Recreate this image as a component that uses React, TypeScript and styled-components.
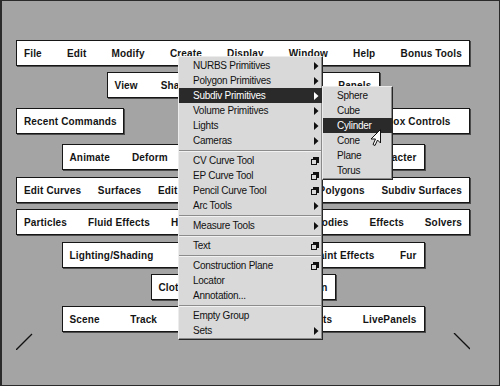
import React from "react";
import styled, { createGlobalStyle } from "styled-components";

type MenuEntry =
  | { label: string; kind?: "arrow" | "option"; active?: boolean }
  | "sep";

const createItems: MenuEntry[] = [
  { label: "NURBS Primitives", kind: "arrow" },
  { label: "Polygon Primitives", kind: "arrow" },
  { label: "Subdiv Primitives", kind: "arrow", active: true },
  { label: "Volume Primitives", kind: "arrow" },
  { label: "Lights", kind: "arrow" },
  { label: "Cameras", kind: "arrow" },
  "sep",
  { label: "CV Curve Tool", kind: "option" },
  { label: "EP Curve Tool", kind: "option" },
  { label: "Pencil Curve Tool", kind: "option" },
  { label: "Arc Tools", kind: "arrow" },
  "sep",
  { label: "Measure Tools", kind: "arrow" },
  "sep",
  { label: "Text", kind: "option" },
  "sep",
  { label: "Construction Plane", kind: "option" },
  { label: "Locator" },
  { label: "Annotation..." },
  "sep",
  { label: "Empty Group" },
  { label: "Sets", kind: "arrow" },
];

const subdivItems = ["Sphere", "Cube", "Cylinder", "Cone", "Plane", "Torus"];

const rows: { labels: string[]; width: number; mt: number }[] = [
  {
    labels: ["File", "Edit", "Modify", "Create", "Display", "Window", "Help", "Bonus Tools"],
    width: 454,
    mt: 0,
  },
  { labels: ["View", "Shading", "Lighting", "Show", "Panels"], width: 273, mt: 6 },
];

const lowerRows: { labels: string[]; width: number; mt: number }[] = [
  {
    labels: ["Animate", "Deform", "Skeleton", "Skin", "Constrain", "Character"],
    width: 363,
    mt: 10,
  },
  {
    labels: ["Edit Curves", "Surfaces", "Edit NURBS", "Polygons", "Edit Polygons", "Subdiv Surfaces"],
    width: 454,
    mt: 7,
  },
  {
    labels: ["Particles", "Fluid Effects", "Hair", "Fields", "Soft/Rigid Bodies", "Effects", "Solvers"],
    width: 454,
    mt: 6,
  },
  {
    labels: ["Lighting/Shading", "Texturing", "Render", "Paint Effects", "Fur"],
    width: 363,
    mt: 7,
  },
  { labels: ["Cloth", "Constraints", "Simulation"], width: 185, mt: 6 },
  { labels: ["Scene", "Track", "Solve Tools", "Constraints", "LivePanels"], width: 363, mt: 6 },
];

const GlobalStyle = createGlobalStyle`
  html, body {
    margin: 0;
    padding: 0;
    background: #a4a4a4;
  }
  body {
    font-family: "Liberation Sans", Arial, sans-serif;
  }
`;

const Arrow = ({ light }: { light?: boolean }) => (
  <svg width="5" height="8" viewBox="0 0 5 8">
    <path d="M0 0 L4.5 4 L0 8 Z" fill={light ? "#fff" : "#111"} />
  </svg>
);

const OptionBox = () => (
  <svg width="8" height="8" viewBox="0 0 8 8">
    <rect x="0.5" y="2.5" width="5" height="5" fill="none" stroke="#111" />
    <path d="M2 1 H7 V6" fill="none" stroke="#111" strokeWidth="2" />
  </svg>
);

const Cursor = () => (
  <svg width="13" height="18" viewBox="0 0 13 18">
    <path
      d="M11.5 0.5 L11.5 14 L8.5 11 L6 16.5 L4 15.5 L6.5 10 L2 10 Z"
      fill="#fff"
      stroke="#111"
      strokeWidth="1"
      strokeLinejoin="round"
    />
  </svg>
);

const Corner = ({ flip }: { flip?: boolean }) => (
  <svg width="17" height="17" viewBox="0 0 17 17">
    {flip ? (
      <line x1="1" y1="0" x2="17" y2="16" stroke="#111" strokeWidth="1.3" />
    ) : (
      <line x1="0" y1="17" x2="16" y2="1" stroke="#111" strokeWidth="1.3" />
    )}
  </svg>
);

const App: React.FunctionComponent = () => {
  return (
    <>
      <GlobalStyle />
      <Frame>
        {rows.map((r) => (
          <Panel key={r.labels[0]} $width={r.width} $mt={r.mt}>
            {r.labels.map((l) => (
              <Label key={l}>{l}</Label>
            ))}
          </Panel>
        ))}
        <SplitRow>
          <Panel $width={108} $mt={0}>
            <Label>Recent Commands</Label>
          </Panel>
          <Panel $width={108} $mt={0}>
            <Label>Hotbox Controls</Label>
          </Panel>
        </SplitRow>
        {lowerRows.map((r) => (
          <Panel key={r.labels[0]} $width={r.width} $mt={r.mt}>
            {r.labels.map((l) => (
              <Label key={l}>{l}</Label>
            ))}
          </Panel>
        ))}
        <CornerRow>
          <Corner />
          <Corner flip />
        </CornerRow>

        <Menu>
          {createItems.map((item, i) =>
            item === "sep" ? (
              <Separator key={`sep-${i}`} />
            ) : (
              <MenuItem key={item.label} $active={item.active}>
                <span>{item.label}</span>
                {item.kind === "arrow" && <Arrow light={item.active} />}
                {item.kind === "option" && <OptionBox />}
                {item.active && (
                  <SubMenu>
                    {subdivItems.map((s) => (
                      <SubItem key={s} $active={s === "Cylinder"}>
                        {s}
                      </SubItem>
                    ))}
                    <CursorSpot>
                      <Cursor />
                    </CursorSpot>
                  </SubMenu>
                )}
              </MenuItem>
            )
          )}
        </Menu>
      </Frame>
    </>
  );
};

export default App;

const Frame = styled.div`
  position: relative;
  box-sizing: border-box;
  width: 500px;
  height: 386px;
  overflow: hidden;
  padding: 39px 29px 0 14px;
  border: 1px solid #2a2a2a;
  border-left-width: 2px;
  background: #a4a4a4;
  display: flex;
  flex-direction: column;
  align-items: center;
`;

const Panel = styled.div<{ $width: number; $mt: number }>`
  box-sizing: border-box;
  width: ${(p) => p.$width}px;
  height: 26px;
  margin-top: ${(p) => p.$mt}px;
  padding: 0 7px;
  display: flex;
  align-items: center;
  justify-content: space-between;
  background: #fff;
  border: 1px solid #161616;
  box-shadow: 1px 1px 0 #4c4c4c;
`;

const SplitRow = styled.div`
  width: 454px;
  margin-top: 10px;
  display: flex;
  justify-content: space-between;
`;

const Label = styled.span`
  font-size: 10px;
  font-weight: bold;
  letter-spacing: 0.15px;
  color: #141414;
  white-space: nowrap;
`;

const CornerRow = styled.div`
  width: 454px;
  height: 17px;
  margin-top: 1px;
  display: flex;
  justify-content: space-between;
`;

const Menu = styled.div`
  position: absolute;
  left: 176px;
  top: 55px;
  width: 145px;
  box-sizing: border-box;
  padding: 1px 0 1px;
  background: #d9d9d9;
  border: 1px solid;
  border-color: #ececec #262626 #262626 #ececec;
  box-shadow: inset -1px -1px 0 #8a8a8a;
`;

const MenuItem = styled.div<{ $active?: boolean }>`
  position: relative;
  height: 15px;
  box-sizing: border-box;
  padding: 0 3px 0 14px;
  display: flex;
  align-items: center;
  justify-content: space-between;
  font-size: 10px;
  letter-spacing: -0.25px;
  color: ${(p) => (p.$active ? "#fff" : "#111")};
  background: ${(p) => (p.$active ? "#2a2a2a" : "transparent")};
  white-space: nowrap;
`;

const Separator = styled.div`
  margin: 2px 1px 1px 0;
  border-top: 1px solid #8c8c8c;
  border-bottom: 1px solid #f2f2f2;
`;

const SubMenu = styled.div`
  position: absolute;
  left: 100%;
  top: -2px;
  width: 71px;
  box-sizing: border-box;
  padding: 1px 0;
  background: #d9d9d9;
  border: 1px solid;
  border-color: #ececec #262626 #262626 #ececec;
  box-shadow: inset -1px -1px 0 #8a8a8a;
`;

const SubItem = styled.div<{ $active?: boolean }>`
  height: 15px;
  padding-left: 14px;
  display: flex;
  align-items: center;
  font-size: 10px;
  letter-spacing: -0.25px;
  color: ${(p) => (p.$active ? "#fff" : "#111")};
  background: ${(p) => (p.$active ? "#2a2a2a" : "transparent")};
`;

const CursorSpot = styled.div`
  position: absolute;
  left: 46px;
  top: 42px;
  line-height: 0;
`;
